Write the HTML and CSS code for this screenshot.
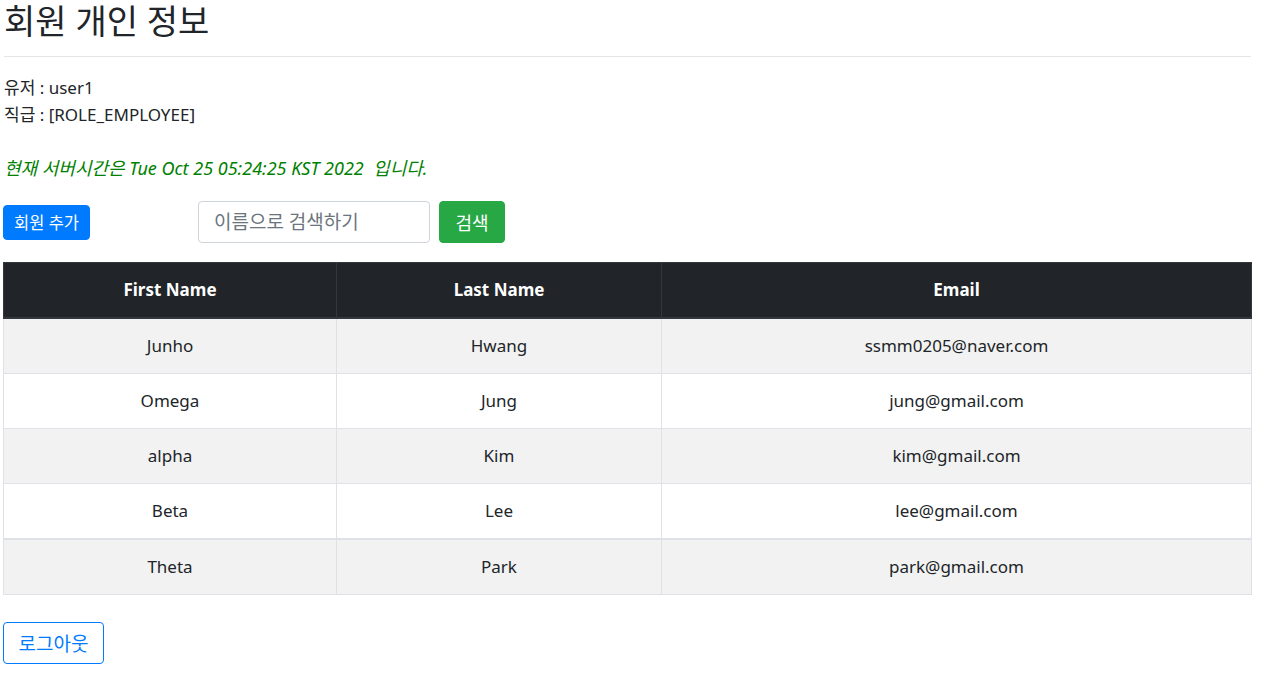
FILE: index.html
```html
<!DOCTYPE html>
<html lang="ko">
<head>
<meta charset="utf-8">
<title>회원 개인 정보</title>
<link rel="stylesheet" href="styles.css">
</head>
<body>
<div class="page">
  <h1 class="title">회원 개인 정보</h1>
  <hr class="rule">
  <div class="info">
    <div>유저 : user1</div>
    <div>직급 : [ROLE_EMPLOYEE]</div>
  </div>
  <p class="server-time">현재 서버시간은 Tue Oct 25 05:24:25 KST 2022 &nbsp;입니다.</p>
  <div class="toolbar">
    <button class="btn btn-add" type="button">회원 추가</button>
    <form class="search">
      <input class="search-input" type="text" placeholder="이름으로 검색하기">
      <button class="btn btn-search" type="button">검색</button>
    </form>
  </div>
  <table class="members">
    <colgroup>
      <col class="c1"><col class="c2"><col class="c3">
    </colgroup>
    <thead>
      <tr><th>First Name</th><th>Last Name</th><th>Email</th></tr>
    </thead>
    <tbody>
      <tr><td>Junho</td><td>Hwang</td><td>ssmm0205@naver.com</td></tr>
      <tr><td>Omega</td><td>Jung</td><td>jung@gmail.com</td></tr>
      <tr><td>alpha</td><td>Kim</td><td>kim@gmail.com</td></tr>
      <tr><td>Beta</td><td>Lee</td><td>lee@gmail.com</td></tr>
    </tbody>
    <tbody>
      <tr><td>Theta</td><td>Park</td><td>park@gmail.com</td></tr>
    </tbody>
  </table>
  <button class="btn btn-logout" type="button">로그아웃</button>
</div>
</body>
</html>
```

FILE: styles.css
```css
html, body {
  margin: 0;
  padding: 0;
  background: #fff;
}
body {
  font-family: "Noto Sans", "Noto Sans CJK KR", sans-serif;
  color: #212529;
  font-size: 16px;
}
.page {
  padding: 0 15px 24px 3px;
}
.title {
  margin: 0 0 14px 1px;
  font-size: 34px;
  line-height: 42px;
  font-weight: 400;
}
.rule {
  margin: 0 0 0 1px;
  border: 0;
  border-top: 1px solid #e5e5e5;
  height: 0;
}
.info {
  margin-top: 17px;
  margin-left: 1px;
  line-height: 27px;
  font-size: 17px;
}
.server-time {
  margin: 27px 0 0 1px;
  line-height: 27px;
  color: #008000;
  font-style: italic;
  font-size: 18px;
}
.toolbar {
  margin-top: 19px;
  display: flex;
  align-items: center;
  height: 42px;
}
.btn {
  font-family: inherit;
  border: 1px solid transparent;
  border-radius: 4px;
  cursor: pointer;
}
.btn-add {
  background: #007bff;
  border-color: #007bff;
  color: #fff;
  height: 35px;
  width: 87px;
  font-size: 16.5px;
  padding: 0;
}
.search {
  margin: 0 0 0 108px;
  display: flex;
  gap: 9px;
}
.search-input {
  width: 232px;
  height: 42px;
  box-sizing: border-box;
  border: 1px solid #ced4da;
  border-radius: 4px;
  padding: 0 15px;
  font-family: inherit;
  font-size: 19px;
  color: #495057;
}
.search-input::placeholder {
  color: #6c757d;
}
.btn-search {
  background: #28a745;
  border-color: #28a745;
  color: #fff;
  height: 42px;
  width: 66px;
  font-size: 18px;
  padding: 0;
}
.members {
  margin-top: 19px;
  width: 1248px;
  border-collapse: collapse;
  table-layout: fixed;
  text-align: center;
  font-size: 17px;
}
.c1 { width: 333px; }
.c2 { width: 325px; }
.c3 { width: 590px; }
.members th {
  background: #212529;
  color: #fff;
  font-weight: 700;
  border: 1px solid #32383e;
  border-bottom-width: 2px;
  padding: 15px 12px;
  line-height: 24px;
}
.members td {
  border: 1px solid #dee2e6;
  padding: 15px 12px;
  line-height: 24px;
}
.members tbody tr:nth-of-type(odd) {
  background: #f2f2f2;
}
.members tbody + tbody {
  border-top: 2px solid #dee2e6;
}
.btn-logout {
  display: block;
  margin-top: 27px;
  background: #fff;
  border-color: #007bff;
  color: #007bff;
  height: 42px;
  width: 101px;
  font-size: 19px;
  padding: 0;
}
```
